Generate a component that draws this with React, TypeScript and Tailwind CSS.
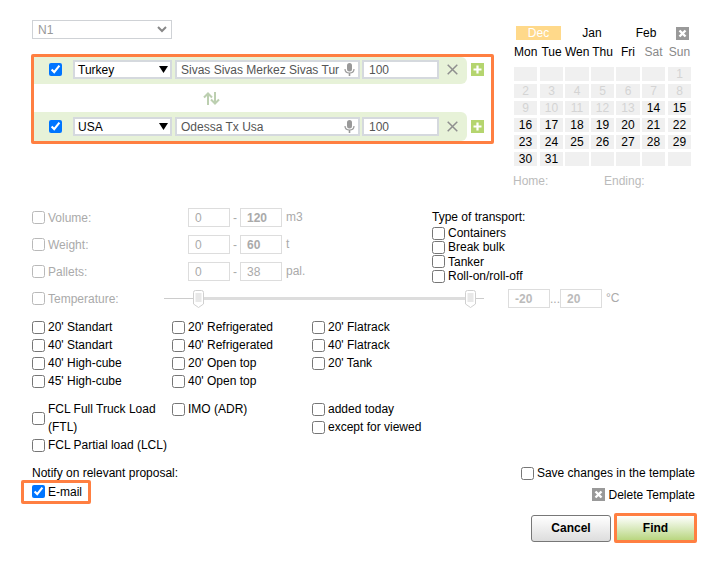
import React from "react";

const CloseSquare = () => (
  <svg width="13" height="13" viewBox="0 0 13 13" className="block shrink-0">
    <rect width="13" height="13" fill="#999999" />
    <path d="M3.5 3.5L9.5 9.5M9.5 3.5L3.5 9.5" stroke="#ffffff" strokeWidth="2.4" />
  </svg>
);

const Triangle = () => (
  <svg width="9" height="7" viewBox="0 0 9 7" className="block shrink-0">
    <path d="M0 0H9L4.5 7Z" fill="#000000" />
  </svg>
);

const Mic = () => (
  <svg width="11" height="13" viewBox="0 0 11 13" className="block shrink-0">
    <rect x="3" y="0" width="5" height="8.5" rx="2.5" fill="#999999" />
    <path d="M1 6C1 8.5 3 10 5.5 10C8 10 10 8.5 10 6" fill="none" stroke="#999999" strokeWidth="1.2" />
    <path d="M5.5 10V13" stroke="#999999" strokeWidth="1.6" />
  </svg>
);

const Cross = () => (
  <svg width="11" height="11" viewBox="0 0 11 11" className="block shrink-0">
    <path d="M0.7 0.7L10.3 10.3M10.3 0.7L0.7 10.3" stroke="#8f8f8f" strokeWidth="1.5" />
  </svg>
);

const Plus = () => (
  <svg width="13" height="13" viewBox="0 0 13 13" className="block shrink-0">
    <rect width="13" height="13" fill="#b5d56f" />
    <path d="M6.5 2.5V10.5M2.5 6.5H10.5" stroke="#ffffff" strokeWidth="2.2" />
  </svg>
);

const Swap = () => (
  <svg width="17" height="13" viewBox="0 0 17 13" className="block">
    <path d="M5 13V1.5M1 5.5L5 1.5L9 5.5" fill="none" stroke="#bccfb0" strokeWidth="2" />
    <path d="M12 0V11.5M8 7.5L12 11.5L16 7.5" fill="none" stroke="#bccfb0" strokeWidth="2" />
  </svg>
);

const Handle = () => (
  <svg width="11" height="18" viewBox="0 0 11 18" className="block">
    <path d="M0.5 2.5Q0.5 0.5 2.5 0.5H8.5Q10.5 0.5 10.5 2.5V14L5.5 17.5L0.5 14Z" fill="#ffffff" stroke="#d0d0d0" />
    <rect x="2.5" y="3" width="6" height="9" fill="#e8e8e8" />
  </svg>
);

function Route({ country, place, extra, plusExtra }: { country: string; place: string; extra: string; plusExtra: string }) {
  return (
    <div className="flex items-center">
      <div className={`flex w-[433px] items-center rounded-r-[6px] bg-[#e7f2d8] pl-[15px] ${extra}`}>
        <input type="checkbox" defaultChecked className="h-[13px] w-[13px]" />
        <div className="ml-[11px] flex h-[19px] w-[99px] items-center justify-between border-2 border-[#d5d9de] bg-white pl-[3px] pr-[2px] text-black">
          <span>{country}</span>
          <Triangle />
        </div>
        <div className="ml-[3px] flex h-[19px] w-[185px] items-center justify-between border-2 border-[#d5d9de] bg-white pl-[4px] pr-[3px] text-[#555555]">
          <span className="whitespace-nowrap">{place}</span>
          <Mic />
        </div>
        <input
          readOnly
          value="100"
          className="ml-[2px] h-[19px] w-[77px] border-2 border-[#d5d9de] bg-white px-[5px] text-[12px] text-[#555555] outline-none"
        />
        <div className="ml-[8px]">
          <Cross />
        </div>
      </div>
      <div className={`ml-[4px] ${plusExtra}`}>
        <Plus />
      </div>
    </div>
  );
}

const offsets = ["mr-[3px]", "mr-[2px]", "mr-[2px]", "mr-[2px]", "mr-[2px]", "mr-[3px]", "mr-0"];
const heads = ["Mon", "Tue", "Wen", "Thu", "Fri", "Sat", "Sun"];

function Calendar() {
  const cells: (number | null)[] = [
    ...Array(6).fill(null),
    ...Array.from({ length: 31 }, (_, i) => i + 1),
    ...Array(5).fill(null),
  ];
  return (
    <div className="ml-[20px] w-[177px] pt-[6px]">
      <div className="flex h-[14px] items-center">
        <div className="ml-[2px] flex h-[14px] w-[45px] items-center justify-center bg-[#ffd98a] text-white">Dec</div>
        <div className="ml-[14px] w-[34px] text-center">Jan</div>
        <div className="ml-[20px] w-[34px] text-center">Feb</div>
        <div className="ml-[13px]">
          <CloseSquare />
        </div>
      </div>
      <div className="mt-[4px] grid h-[16px] grid-cols-[26px_25px_26px_25px_26px_26px_23px] items-center">
        {heads.map((h, i) => (
          <div
            key={h}
            className={`${offsets[i]} whitespace-nowrap text-center ${i > 4 ? "text-[#888888]" : "text-black"} ${
              i === 2 || i === 4 ? "w-[24px]" : "w-[23px]"
            }`}
          >
            {h}
          </div>
        ))}
      </div>
      <div className="mt-[7px] grid grid-cols-[26px_25px_26px_25px_26px_26px_23px] gap-y-[3px]">
        {cells.map((c, i) => (
          <div
            key={i}
            className={`h-[14px] ${offsets[i % 7]} flex items-center justify-center bg-[#f0f0f0] ${
              c !== null && c < 14 ? "text-[#d4d4d4]" : "text-black"
            }`}
          >
            {c}
          </div>
        ))}
      </div>
      <div className="mt-[8px] flex text-[#bbbbbb]">
        <span className="-ml-px w-[91px]">Home:</span>
        <span>Ending:</span>
      </div>
    </div>
  );
}

function Disabled({ label, unit, a, b, bold }: { label: string; unit: string; a: string; b: string; bold: boolean }) {
  return (
    <div className="mb-[8px] flex h-[19px] items-center text-[#aaaaaa]">
      <input type="checkbox" className="h-[13px] w-[13px] opacity-50" />
      <span className="ml-[3px] w-[140px]">{label}</span>
      <div className="flex h-[19px] w-[42px] items-center border border-[#dddddd] pl-[6px] text-[#aaaaaa]">{a}</div>
      <span className="w-[10px] text-center">-</span>
      <div className={`flex h-[19px] w-[42px] items-center border border-[#dddddd] pl-[6px] text-[#aaaaaa] ${bold ? "font-bold" : ""}`}>{b}</div>
      <span className="ml-[4px] -mt-[2px]">{unit}</span>
    </div>
  );
}

function Check({ label, className = "" }: { label: string; className?: string }) {
  return (
    <label className={`flex h-[18px] items-center ${className}`}>
      <input type="checkbox" className="h-[13px] w-[13px] shrink-0" />
      <span className="ml-[3px] whitespace-nowrap">{label}</span>
    </label>
  );
}

function TypeRow({ label }: { label: string }) {
  return (
    <label className="flex h-[14.3px] items-center">
      <input type="checkbox" className="h-[13px] w-[13px]" />
      <span className="ml-[3px]">{label}</span>
    </label>
  );
}

export default function App() {
  return (
    <div className="h-[563px] w-[721px] overflow-hidden bg-white font-['Liberation_Sans',Arial,sans-serif] text-[12px] leading-[14px] text-black">
      <div className="flex h-[208px] items-start pl-[31px] pt-[20px]">
        <div className="w-[463px]">
          <div className="ml-px flex h-[19px] w-[140px] items-center justify-between border border-[#cfd2d6] pl-[5px] pr-[4px] text-[#999999]">
            <span>N1</span>
            <svg width="10" height="7" viewBox="0 0 10 7" className="block">
              <path d="M1 1L5 5L9 1" fill="none" stroke="#888888" strokeWidth="2" />
            </svg>
          </div>
          <div className="mt-[15px] h-[90px] rounded-[2px] border-3 border-[#ff7f41]">
            <Route country="Turkey" place="Sivas Sivas Merkez Sivas Tur" extra="h-[27px] pb-[2px]" plusExtra="mb-[2px]" />
            <div className="flex h-[28px] items-center pl-[169px]">
              <Swap />
            </div>
            <Route country="USA" place="Odessa Tx Usa" extra="h-[29px]" plusExtra="" />
          </div>
        </div>
        <Calendar />
      </div>

      <div className="flex h-[81px] items-start pl-[32px]">
        <div className="w-[400px]">
          <Disabled label="Volume:" unit="m3" a="0" b="120" bold />
          <Disabled label="Weight:" unit="t" a="0" b="60" bold />
          <Disabled label="Pallets:" unit="pal." a="0" b="38" bold={false} />
        </div>
        <div className="pt-[2px]">
          <div className="mb-[2px]">Type of transport:</div>
          <TypeRow label="Containers" />
          <TypeRow label="Break bulk" />
          <TypeRow label="Tanker" />
          <TypeRow label="Roll-on/roll-off" />
        </div>
      </div>

      <div className="flex h-[19px] items-center pl-[32px] text-[#aaaaaa]">
        <input type="checkbox" className="h-[13px] w-[13px] opacity-50" />
        <span className="ml-[3px] w-[116px]">Temperature:</span>
        <div className="relative h-[19px] w-[320px]">
          <div className="absolute left-0 top-[9px] h-px w-[320px] bg-[#cccccc]" />
          <div className="absolute left-[34px] top-[8px] h-[3px] w-[272px] bg-[#dddddd]" />
          <div className="absolute left-[29px] top-[1px]">
            <Handle />
          </div>
          <div className="absolute left-[301px] top-[1px]">
            <Handle />
          </div>
        </div>
        <div className="ml-[24px] flex h-[19px] w-[42px] items-center border border-[#dddddd] pl-[6px] font-bold text-[#bbbbbb]">-20</div>
        <span className="w-[10px] text-center">...</span>
        <div className="flex h-[19px] w-[42px] items-center border border-[#dddddd] pl-[6px] font-bold text-[#bbbbbb]">20</div>
        <span className="ml-[4px] -mt-[1px]">°C</span>
      </div>

      <div className="mt-[10px] grid grid-cols-[140px_140px_1fr] pl-[32px]">
        <Check label="20' Standart" />
        <Check label="20' Refrigerated" />
        <Check label="20' Flatrack" />
        <Check label="40' Standart" />
        <Check label="40' Refrigerated" />
        <Check label="40' Flatrack" />
        <Check label="40' High-cube" />
        <Check label="20' Open top" />
        <Check label="20' Tank" />
        <Check label="45' High-cube" />
        <Check label="40' Open top" />
      </div>

      <div className="mt-[10px] grid grid-cols-[140px_140px_1fr] pl-[32px] leading-[18px]">
        <div>
          <label className="flex items-center">
            <input type="checkbox" className="h-[13px] w-[13px] shrink-0" />
            <span className="ml-[3px] w-[120px]">FCL Full Truck Load (FTL)</span>
          </label>
          <Check label="FCL Partial load (LCL)" />
        </div>
        <div>
          <Check label="IMO (ADR)" />
        </div>
        <div>
          <Check label="added today" />
          <Check label="except for viewed" />
        </div>
      </div>

      <div className="mt-[12px] flex items-start justify-between pl-[32px] pr-[24px]">
        <div>
          <div className="h-[14px]">Notify on relevant proposal:</div>
          <div className="-ml-[11px] flex h-[24px] w-[70px] items-center rounded-[2px] border-3 border-[#ff7f41] pb-[1px] pl-[8px]">
            <input type="checkbox" defaultChecked className="h-[13px] w-[13px]" />
            <span className="ml-[3px]">E-mail</span>
          </div>
        </div>
        <div className="flex w-[176px] flex-col items-end">
          <label className="mr-[2px] flex h-[14px] items-center">
            <input type="checkbox" className="h-[13px] w-[13px] shrink-0" />
            <span className="ml-[3px] whitespace-nowrap">Save changes in the template</span>
          </label>
          <div className="mr-[2px] mt-[8px] flex h-[13px] items-center">
            <CloseSquare />
            <span className="ml-[4px]">Delete Template</span>
          </div>
          <div className="mt-[12px] flex items-center">
            <button className="h-[27px] w-[80px] rounded-[3px] border border-[#777777] bg-gradient-to-b from-white to-[#dddddd] font-bold">
              Cancel
            </button>
            <button className="ml-[3px] h-[30px] w-[83px] rounded-[2px] border-3 border-[#ff7f41] bg-gradient-to-b from-white to-[#b9d67f] font-bold">
              Find
            </button>
          </div>
        </div>
      </div>
    </div>
  );
}
